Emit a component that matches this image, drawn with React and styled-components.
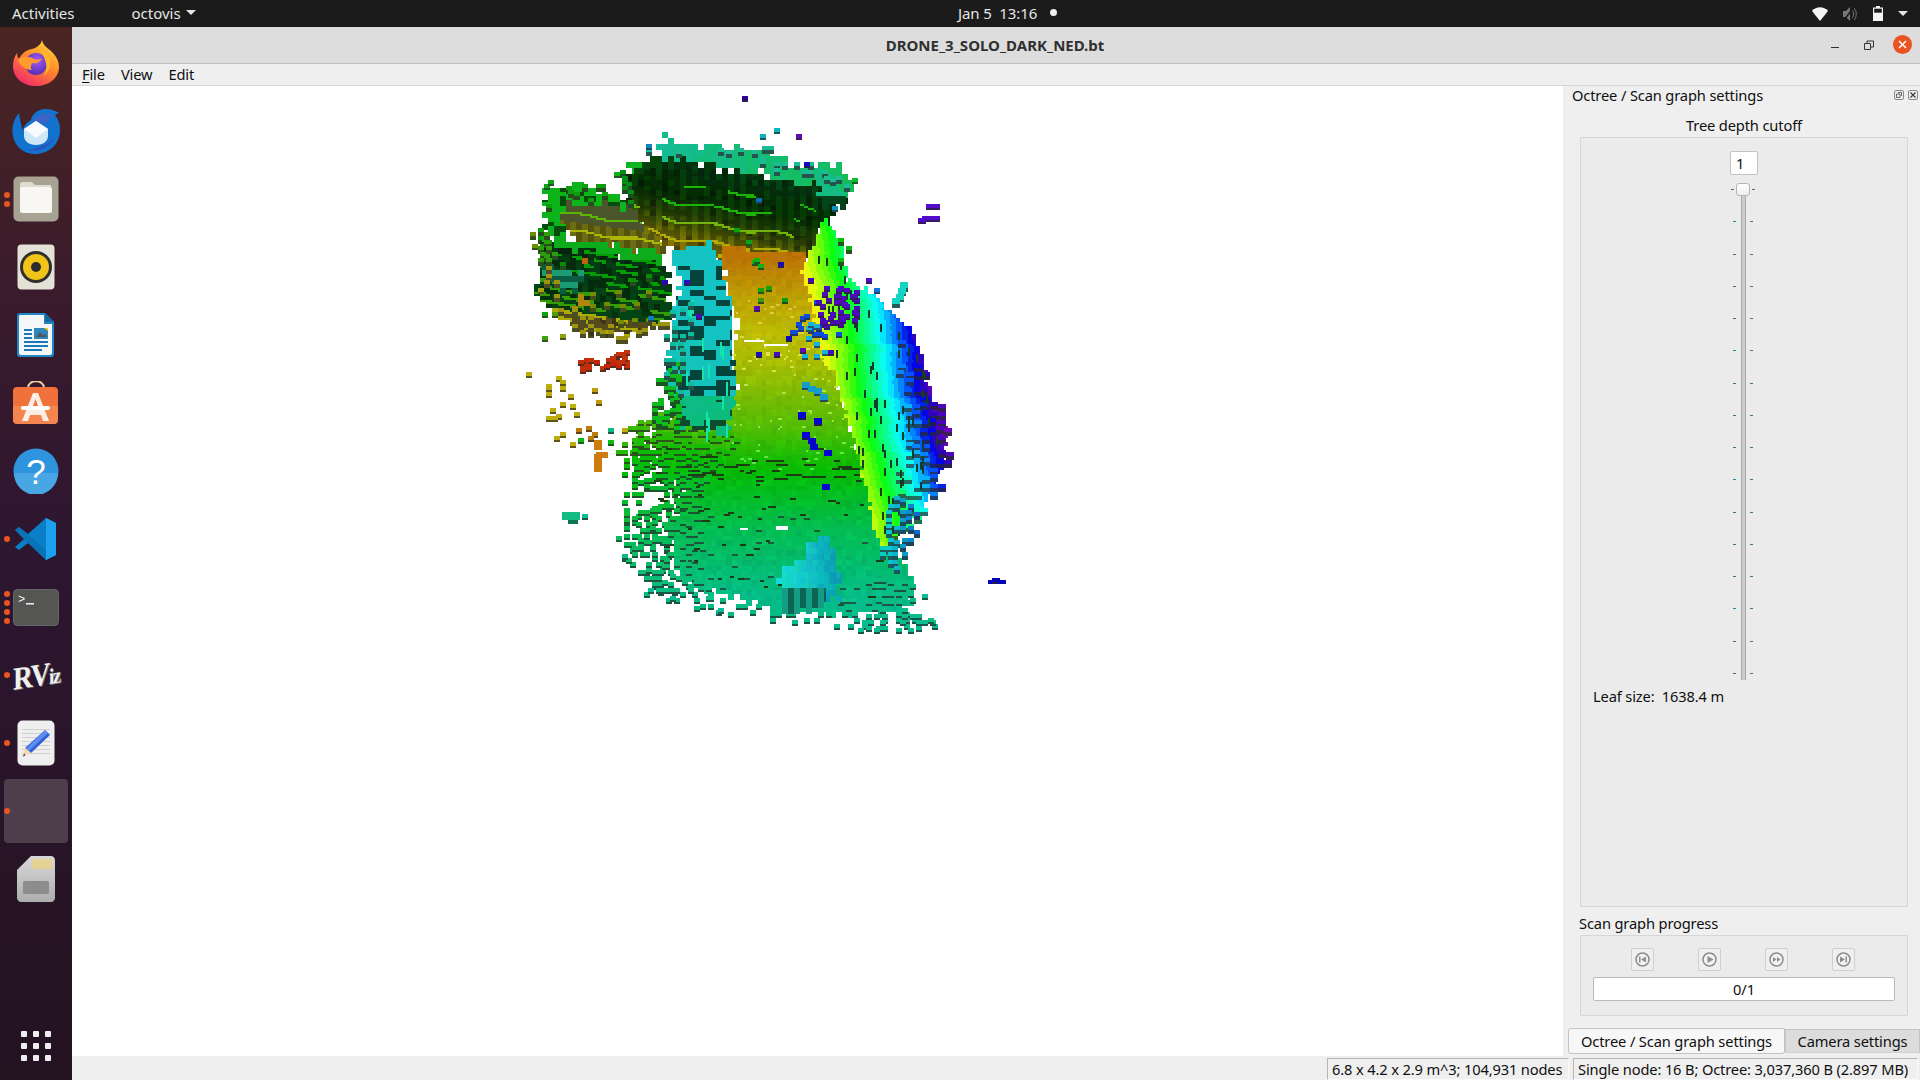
import React from 'react'
import styled, { createGlobalStyle } from 'styled-components'

/* point cloud painter: a small 2px raster, turned into svg paths */
const CELL = 2
const GX = 520
const GY = 90
const GW = 245
const GH = 280

const lerpTable = (table, v) => {
    if (v <= table[0][0]) return table[0][1]
    for (let i = 1; i < table.length; i++) {
        if (v <= table[i][0]) {
            const [a, b] = [table[i - 1], table[i]]
            return a[1] + ((v - a[0]) / (b[0] - a[0])) * (b[1] - a[1])
        }
    }
    return table[table.length - 1][1]
}

const hsv = (h, s, v) => {
    const f = (n) => {
        const k = (n + h / 60) % 6
        return Math.round(255 * (v - v * s * Math.max(0, Math.min(k, 4 - k, 1))))
    }
    return (f(5) << 16) | (f(3) << 8) | f(1)
}

const darken = (c, m = 0.32, add = 28) => {
    const ch = (s) => Math.min(255, Math.round(((c >> s) & 255) * m + add))
    return (ch(16) << 16) | (ch(8) << 8) | ch(0)
}

const noise = (a, b) => {
    const s = Math.sin(a * 127.1 + b * 311.7) * 43758.5453
    return s - Math.floor(s)
}

const inPoly = (x, y, poly) => {
    let inside = false
    for (let i = 0, j = poly.length - 1; i < poly.length; j = i++) {
        const [xi, yi] = poly[i]
        const [xj, yj] = poly[j]
        if (yi > y !== yj > y && x < ((xj - xi) * (y - yi)) / (yj - yi) + xi) inside = !inside
    }
    return inside
}

const z6 = (pts) => pts.map(([x, y]) => [510 + x / 3, 90 + y / 3])
const z7 = (pts) => pts.map(([x, y]) => [510 + x / 3, 360 + y / 3])

const floorHue = (y) => lerpTable([[255, 36], [300, 52], [360, 66], [427, 95], [460, 115], [527, 145], [593, 162], [630, 165]], y)
const wallEdge = (y) => lerpTable([[217, 805], [323, 833], [393, 842], [470, 862], [547, 885]], y)

const wallColor = (x, y) => {
    const d = x - wallEdge(y) - (noise(Math.floor(y / 9), 3) * 5)
    const raw = d < 0 ? Math.max(48, 90 + d * 1.6) : Math.min(282, 90 + d * 2.05)
    const hue = Math.round(raw / 11) * 11
    return hsv(hue, hue > 180 ? 1 : 0.95, hue > 250 ? 0.72 : hue > 225 ? 0.88 : 1)
}

const buildCloud = () => {
    const grid = new Int32Array(GW * GH).fill(-1)
    let seed = 1234567
    const rnd = () => {
        seed = (seed * 1664525 + 1013904223) >>> 0
        return seed / 4294967296
    }

    const rect = (x, y, w, h, c) => {
        const x0 = Math.round((x - GX) / CELL)
        const y0 = Math.round((y - GY) / CELL)
        const x1 = x0 + Math.max(1, Math.round(w / CELL))
        const y1 = y0 + Math.max(1, Math.round(h / CELL))
        for (let r = Math.max(0, y0); r < Math.min(GH, y1); r++) {
            for (let q = Math.max(0, x0); q < Math.min(GW, x1); q++) grid[r * GW + q] = c
        }
    }

    const voxel = (x, y, c, w = 6, h = 4, side = 3) => {
        rect(x, y + h, w, side, darken(c))
        rect(x, y, w, h, c)
    }

    // solid area, edges are stair-stepped and a bit torn
    const paint = (poly, color, block = 6, rough = 8) => {
        const xs = poly.map((p) => p[0])
        const ys = poly.map((p) => p[1])
        for (let y = Math.min(...ys) - rough; y < Math.max(...ys) + rough; y += CELL) {
            for (let x = Math.min(...xs) - rough; x < Math.max(...xs) + rough; x += CELL) {
                const ix = Math.floor(x / block)
                const iy = Math.floor(y / block)
                const bx = ix * block + block / 2 + (noise(ix, iy) - 0.5) * rough
                const by = iy * block + block / 2 + (noise(iy, ix + 7) - 0.5) * rough
                if (inPoly(bx, by, poly)) rect(x, y, CELL, CELL, color(x, y))
            }
        }
    }

    const scatter = (poly, color, { step = 7, prob = 0.5, w = 6, h = 4, side = 3, skip = null } = {}) => {
        const xs = poly.map((p) => p[0])
        const ys = poly.map((p) => p[1])
        for (let y = Math.min(...ys); y < Math.max(...ys); y += step) {
            for (let x = Math.min(...xs); x < Math.max(...xs); x += step) {
                const vx = x + rnd() * 3
                const vy = y + rnd() * 3
                if (rnd() < prob && inPoly(vx, vy, poly) && !(skip && inPoly(vx, vy, skip))) voxel(vx, vy, color(vx, vy), w, h, side)
            }
        }
    }

    const dashes = (poly, colorVal, { count = 100, min = 4, max = 16, h = 2 } = {}) => {
        const xs = poly.map((p) => p[0])
        const ys = poly.map((p) => p[1])
        for (let i = 0; i < count; i++) {
            const x = Math.min(...xs) + rnd() * (Math.max(...xs) - Math.min(...xs))
            const y = Math.min(...ys) + rnd() * (Math.max(...ys) - Math.min(...ys))
            if (inPoly(x, y, poly)) rect(x, y, min + rnd() * (max - min), h, typeof colorVal === 'function' ? colorVal(x, y) : colorVal)
        }
    }

    // back wall, upper left
    const wallT = (x, y) => y - 0.2 * (x - 660) - 158
    const wallFace = (x, y) => {
        const t = wallT(x, y)
        const wob = Math.sin(x / 11) * 2.5 + Math.sin(x / 29) * 3
        const band = (t + wob) % 18
        const col = Math.floor(x / 6) % 2
        if (band < 2.5 && t > 18 && noise(Math.floor(x / 22), Math.floor(t / 18)) > 0.35) {
            const hue = t < 45 ? 112 : t < 62 ? 80 : 58
            return hsv(hue, 1, 0.7)
        }
        const hue = lerpTable([[0, 135], [30, 120], [50, 90], [70, 62], [95, 44]], t)
        const v = lerpTable([[0, 0.26], [30, 0.22], [50, 0.28], [70, 0.42], [95, 0.62]], t)
        return hsv(hue, 0.95, v * (col ? 1 : 0.72) * (noise(Math.floor(x / 6), Math.floor(y / 5)) > 0.75 ? 0.75 : 1))
    }

    // left room wall goes first, it runs under the junction
    const leftFace = (x, y) => {
        const t = y - 0.13 * (x - 563) - 193
        const wob = Math.sin(x / 9) * 1.5
        if ((t + wob) % 17 < 2.5 && t > 8) return t < 24 ? hsv(90, 1, 0.7) : hsv(62, 1, 0.7)
        return t < 26 ? hsv(75, 0.45, 0.33) : hsv(62, 0.85, 0.42 * (Math.floor(x / 6) % 2 ? 1 : 0.8))
    }
    paint(z6([[150, 315], [360, 320], [480, 470], [450, 490], [230, 445], [150, 420]]), leftFace)
    paint(z6([[345, 235], [450, 205], [560, 225], [900, 285], [1005, 315], [960, 375], [880, 515], [620, 505], [450, 480], [345, 330]]), wallFace)
    scatter(z6([[620, 490], [880, 500], [870, 525], [630, 520]]), () => hsv(58, 0.95, 0.7), { prob: 0.4 })

    // green rim of the left wall, mottled
    paint(z6([[100, 295], [190, 280], [280, 295], [350, 325], [370, 350], [160, 318], [160, 430], [100, 430]]), (x, y) => {
        const n = noise(Math.floor(x / 6), Math.floor(y / 5))
        return n > 0.72 ? hsv(125, 0.95, 0.3) : hsv(122 + n * 12, 0.95, 0.7)
    })
    scatter(z6([[60, 420], [100, 280], [350, 280], [365, 320], [110, 330], [110, 480]]), () => hsv(118, 0.95, 0.62), { prob: 0.36 })
    scatter(z6([[330, 235], [360, 235], [365, 340], [335, 340]]), () => hsv(125, 0.95, 0.55), { prob: 0.5, step: 6 })

    // left block in front of it
    const blockFace = (x, y) => {
        const t = y - 0.16 * (x - 553) - 237
        const row = Math.floor(t / 7)
        const on = noise(row, Math.floor(x / 11)) < 0.6 && t % 7 < 3
        const mott = noise(Math.floor(x / 6), row) > 0.6 ? 0.7 : 1
        if (t < 70) return on ? hsv(t < 40 ? 122 : 100, 1, 0.62) : hsv(135, 0.95, (0.2 + (t / 70) * 0.08) * mott)
        return on ? hsv(62, 1, 0.68) : hsv(48, 0.7, 0.34 * mott)
    }
    paint(z6([[85, 455], [440, 505], [480, 545], [480, 690], [300, 735], [200, 712], [105, 630], [85, 600]]), blockFace)
    paint(z6([[105, 430], [140, 432], [440, 480], [440, 512], [120, 465]]), () => hsv(128, 0.95, 0.68))
    paint(z6([[95, 530], [200, 550], [200, 610], [150, 600], [95, 560]]), (x, y) => hsv(162, 0.85, 0.62 * (Math.floor(y / 6) % 2 ? 1 : 0.6)))
    paint(z6([[195, 610], [230, 600], [225, 650], [195, 650]]), () => hsv(42, 0.95, 0.7))
    paint(z6([[210, 500], [245, 500], [240, 520], [210, 520]]), () => hsv(30, 0.95, 0.72))
    scatter(z6([[60, 420], [130, 430], [130, 650], [220, 730], [300, 745], [470, 715], [480, 690], [280, 700], [100, 600]]), (x, y) => (y < 260 ? hsv(105, 0.95, 0.62) : hsv(58, 0.9, 0.6)), { prob: 0.45 })
    scatter(z6([[110, 470], [440, 520], [470, 680], [300, 720], [130, 620]]), (x, y) => (y < 285 ? hsv(118, 0.95, 0.55) : hsv(70, 0.95, 0.55)), { step: 14, prob: 0.3 })

    // floor
    const floorColor = (x, y) => {
        const n = noise(Math.floor(x / 5), Math.floor(y / 5))
        return hsv(floorHue(y), 0.98, 0.71 + n * 0.05)
    }
    const floorSolid = [[717, 250], [803, 255], [830, 360], [862, 462], [885, 548], [905, 565], [915, 592], [905, 605], [885, 615], [840, 612], [800, 612], [740, 600], [690, 585], [670, 560], [665, 520], [690, 500], [665, 470], [655, 430], [700, 425], [733, 400], [735, 330]]
    paint(floorSolid, floorColor)
    dashes([[725, 300], [830, 300], [870, 470], [725, 470]], (x, y) => hsv(floorHue(y) - 4, 0.7, 0.88), { count: 120, min: 2, max: 4 })
    const fringe = [[625, 420], [700, 400], [735, 420], [890, 560], [935, 628], [840, 625], [740, 615], [650, 600], [620, 560], [615, 440]]
    scatter(fringe, (x, y) => hsv(floorHue(y), 0.98, 0.72), { prob: 0.5, side: 2, skip: floorSolid })
    scatter([[625, 420], [700, 400], [735, 440], [690, 500], [630, 480]], (x, y) => hsv(floorHue(y) + 8, 0.98, 0.72), { step: 6, prob: 0.78, h: 4, side: 2 })
    scatter([[630, 510], [700, 490], [700, 590], [660, 592], [625, 560]], (x, y) => hsv(floorHue(y), 0.95, 0.72), { step: 6, prob: 0.6, side: 2 })
    scatter([[830, 590], [900, 570], [935, 625], [860, 635]], (x, y) => hsv(floorHue(y), 0.95, 0.72), { step: 7, prob: 0.6, side: 2 })
    scatter([[670, 500], [880, 520], [900, 610], [700, 600]], (x, y) => hsv(floorHue(y), 0.95, 0.72 + rnd() * 0.05), { step: 12, prob: 0.3, side: 1 })
    dashes([[640, 440], [860, 450], [885, 600], [660, 590]], 0x1b3b14, { count: 70, min: 3, max: 8 })
    dashes([[680, 455], [860, 462], [860, 482], [680, 476]], 0x1b3b14, { count: 36, min: 6, max: 18 })
    rect(743, 340, 20, 2, -1)
    rect(763, 344, 24, 2, -1)
    rect(730, 333, 8, 5, -1)
    rect(740, 527, 8, 2, -1)
    rect(776, 526, 12, 3, -1)

    // right wall, the height colours run across it
    const rightWall = z6([[940, 380], [1000, 450], [1010, 560], [1080, 600], [1100, 620], [1210, 720], [1260, 890]])
        .concat([[947, 427], [943, 470], [917, 513], [887, 547], [877, 540], [860, 460], [837, 377], [823, 357], [803, 270]])
    paint(rightWall, wallColor, 4, 5)
    scatter([[890, 330], [930, 380], [950, 430], [945, 475], [915, 520], [885, 552], [880, 500], [905, 420]], wallColor, { step: 8, prob: 0.55, w: 7, h: 4, side: 4 })
    for (let i = 0; i < 110; i++) {
        const y = 250 + rnd() * 290
        const x = wallEdge(y) + rnd() * 90
        if (inPoly(x, y, rightWall)) rect(x, y, 2, 7, 0x123b2c)
    }
    scatter([[885, 495], [925, 500], [915, 530], [895, 572], [878, 560]], (x, y) => hsv(180 + (x - 885), 0.95, 0.8), { step: 7, prob: 0.7, side: 4 })
    scatter(z6([[985, 420], [1020, 430], [1020, 510], [985, 510]]), () => hsv(118, 0.95, 0.72), { prob: 0.35 })

    // teal column
    const column = [[707, 240], [717, 267], [730, 303], [733, 383], [733, 403], [723, 433], [677, 427], [673, 403], [665, 383], [672, 317], [680, 287], [672, 253]]
    paint(column, (x, y) => {
        const row = Math.floor(y / 5)
        const on = noise(row, Math.floor(x / 13)) < (y < 265 ? 0.88 : 0.64)
        if (y > 395) return on ? hsv(158, 0.95, 0.74) : hsv(150, 0.9, 0.3)
        const hue = y < 340 ? 182 : 176
        return on ? hsv(hue, 0.92, 0.78) : hsv(170, 0.9, 0.26)
    }, 5, 6)
    paint([[677, 404], [728, 396], [732, 408], [680, 416]], () => hsv(160, 0.95, 0.74))
    dashes([[682, 300], [728, 300], [728, 430], [682, 430]], 0x10e0a8, { count: 16, min: 2, max: 3, h: 14 })
    scatter([[655, 370], [675, 360], [680, 430], [650, 420]], () => hsv(125, 0.95, 0.72), { step: 6, prob: 0.7 })
    scatter([[665, 300], [690, 300], [690, 390], [662, 390]], () => hsv(170, 0.92, 0.72), { step: 8, prob: 0.4 })

    // cyan block on the floor
    paint([[805, 537], [830, 540], [837, 560], [840, 593], [810, 607], [783, 613], [777, 573], [783, 560], [805, 557]], (x, y) => {
        if (y > 586 && x < 825) return Math.floor(x / 6) % 2 ? hsv(170, 0.9, 0.4) : hsv(168, 0.9, 0.62)
        return hsv(170 + (x - 780) * 0.2 + noise(Math.floor(x / 6), Math.floor(y / 6)) * 10, 0.92, 0.86 - (x - 780) * 0.003)
    })

    // top bands of the back wall
    const band = z6([[345, 230], [345, 225], [450, 205], [450, 140], [550, 175], [620, 160], [770, 190], [880, 245], [925, 225], [1000, 230], [1025, 290], [1000, 320], [900, 285], [800, 262], [600, 225], [450, 205]])
    paint(band, (x, y) => hsv(160 - (x - 660) * 0.1 + noise(Math.floor(x / 6), Math.floor(y / 6)) * 8, 0.9, 0.74))
    paint(z6([[345, 225], [450, 205], [450, 240], [345, 260]]), (x, y) => hsv(130, 0.95, noise(Math.floor(x / 8), Math.floor(y / 6)) > 0.55 ? 0.7 : 0.25))
    paint(z6([[920, 240], [1010, 300], [1000, 345], [920, 340]]), (x, y) => (y > 195 ? hsv(140, 0.9, 0.28) : hsv(158, 0.9, 0.75)))
    scatter(z6([[410, 170], [560, 170], [780, 170], [1030, 260], [1030, 300], [880, 260], [600, 190], [420, 200]]), () => hsv(165, 0.85, 0.72), { prob: 0.26 })

    // loose voxels, [x, y, hue] in crops of the reference
    const loose6 = [
        [706, 25, 258, 0.55], [760, 138, 185, 0.75], [800, 125, 185, 0.75], [865, 140, 268, 0.7], [888, 222, 240, 0.75], [745, 335, 205, 0.7], [972, 357, 195, 0.75],
        [1032, 270, 130, 0.75], [320, 257, 125, 0.7], [108, 288, 125, 0.65], [120, 278, 125, 0.65], [415, 170, 200, 0.75], [1075, 575, 262, 0.8], [1100, 605, 210, 0.85],
        [742, 655, 268, 0.75], [568, 682, 262, 0.7], [532, 580, 250, 0.75], [462, 580, 250, 0.7], [815, 527, 245, 0.7], [745, 795, 245, 0.75], [802, 795, 260, 0.75],
        [960, 790, 262, 0.7], [880, 782, 270, 0.7], [835, 745, 240, 0.75], [905, 575, 262, 0.7], [425, 688, 200, 0.7], [715, 460, 125, 0.65], [680, 420, 120, 0.65],
        [755, 603, 115, 0.65], [775, 597, 115, 0.65], [752, 632, 100, 0.6], [825, 635, 125, 0.6], [735, 520, 125, 0.7], [750, 530, 125, 0.7], [740, 512, 125, 0.7],
        [105, 745, 100, 0.65], [160, 738, 70, 0.65], [102, 677, 118, 0.65], [135, 675, 90, 0.6], [55, 852, 55, 0.75], [145, 865, 55, 0.75], [115, 893, 55, 0.75],
        [158, 880, 55, 0.75], [68, 432, 75, 0.55], [75, 470, 75, 0.55], [92, 603, 62, 0.65],
    ]
    loose6.forEach(([x, y, h, v]) => voxel(510 + x / 3 - 3, 90 + y / 3 - 3, hsv(h, 0.95, v), 6, 4, 2))

    const loose7 = [
        [55, 45, 55], [115, 85, 55], [115, 105, 55], [158, 70, 55], [158, 88, 55], [185, 112, 55], [255, 95, 48], [268, 130, 50], [160, 136, 55], [190, 140, 58], [127, 152, 55], [202, 162, 55],
        [145, 172, 55], [118, 175, 55], [135, 178, 55], [157, 222, 55], [143, 238, 55], [187, 255, 55], [208, 210, 38], [235, 208, 38], [252, 225, 38], [240, 235, 38], [262, 250, 38],
        [210, 240, 118], [302, 250, 120], [302, 210, 160], [345, 215, 55], [225, 470, 165], [350, 465, 135], [352, 485, 135], [328, 535, 150], [345, 592, 158], [425, 690, 165], [490, 715, 165], [633, 752, 168], [1243, 708, 165], [1265, 785, 160],
    ]
    loose7.forEach(([x, y, h]) => voxel(510 + x / 3 - 3, 360 + y / 3 - 3, hsv(h, 0.95, 0.74), 6, 4, 2))

    // red cluster
    for (let i = 0; i < 34; i++) {
        const x = 578 + rnd() * 55
        const y = 355 - (x - 578) * 0.1 + rnd() * 14
        voxel(x, y, hsv(8 + rnd() * 6, 0.95, 0.76), 6, 4, 2)
    }
    // orange column
    ;[[262, 250], [262, 262], [270, 285], [262, 292], [280, 285], [263, 310], [262, 328]].forEach(([x, y]) => voxel(510 + x / 3 - 4, 360 + y / 3 - 4, hsv(34, 0.95, 0.8), 8, 5, 2))
    // teal lump on the left
    rect(561, 511, 17, 8, hsv(160, 0.9, 0.72))
    rect(567, 519, 10, 4, hsv(160, 0.9, 0.45))
    // blue and purple clusters
    for (let i = 0; i < 70; i++) {
        const x = 790 + rnd() * 65
        const y = 285 + rnd() * 50
        const far = x > 815 && y < 325
        if (x + y * 0.8 > 1050 || x > 815) voxel(x, y, far ? hsv(262, 0.95, 0.75) : hsv(222, 0.95, 0.85), 6, 4, 2)
    }
    for (let i = 0; i < 8; i++) voxel(800 + rnd() * 22, 315 + rnd() * 40, hsv(192, 0.9, 0.85), 6, 4, 2)
    ;[[875, 165], [920, 185], [885, 225], [900, 240], [908, 258], [950, 278], [942, 380], [885, 75], [905, 85], [920, 95], [940, 112]].forEach(([x, y], i) => voxel(510 + x / 3 - 3, 360 + y / 3 - 3, i > 6 ? hsv(195, 0.9, 0.8) : hsv(242, 1, 0.8), 7, 5, 2))
    ;[[1265, 348], [1258, 350], [1275, 350], [1245, 388], [1235, 392], [1255, 385], [1275, 388]].forEach(([x, y]) => voxel(510 + x / 3 - 3, 90 + y / 3 - 3, hsv(262, 0.95, 0.8), 7, 4, 2))
    ;[[1440, 668], [1455, 665], [1470, 666]].forEach(([x, y]) => voxel(510 + x / 3 - 3, 360 + y / 3 - 3, hsv(240, 1, 0.72), 8, 3, 2))
    ;[[1180, 585], [1172, 600], [1165, 620], [1155, 635]].forEach(([x, y]) => voxel(510 + x / 3 - 3, 90 + y / 3 - 3, hsv(176, 0.9, 0.82), 7, 5, 3))

    // merge runs into one path per colour
    const paths = new Map()
    for (let r = 0; r < GH; r++) {
        let q = 0
        while (q < GW) {
            const c = grid[r * GW + q]
            if (c < 0) {
                q++
                continue
            }
            const key = (c & 0xf8f8f8) | 0x040404
            let end = q + 1
            while (end < GW && grid[r * GW + end] >= 0 && ((grid[r * GW + end] & 0xf8f8f8) | 0x040404) === key) end++
            const piece = `M${GX + q * CELL} ${GY + r * CELL}h${(end - q) * CELL}v${CELL}h-${(end - q) * CELL}z`
            paths.set(key, (paths.get(key) || '') + piece)
            q = end
        }
    }
    return [...paths].map(([key, d]) => ({ fill: `#${key.toString(16).padStart(6, '0')}`, d }))
}

const CLOUD = buildCloud()

const GlobalStyle = createGlobalStyle`
    html, body {
        margin: 0;
        padding: 0;
        width: 1920px;
        height: 1080px;
        overflow: hidden;
        font-family: "Noto Sans", "Open Sans", sans-serif;
        font-size: 14.67px;
        letter-spacing: -0.14px;
        color: #101010;
    }
    * { box-sizing: border-box; }
`

const Desktop = styled.div`
    width: 1920px;
    height: 1080px;
    display: flex;
    flex-direction: column;
`

const TopBar = styled.div`
    height: 27px;
    flex: none;
    background: #1b1b1b;
    color: #e6e6e6;
    display: flex;
    align-items: center;
    position: relative;
    font-size: 15px;
    letter-spacing: 0;
`

const TopItem = styled.span`
    margin-left: ${(p) => p.$left}px;
    margin-top: -2px;
    display: flex;
    align-items: center;
    gap: 5px;
`

const Clock = styled.div`
    position: absolute;
    left: 958px;
    top: -1px;
    height: 27px;
    display: flex;
    align-items: center;
    gap: 9px;
    white-space: pre;
    letter-spacing: -0.1px;
`

const RecDot = styled.i`
    width: 7px;
    height: 7px;
    border-radius: 50%;
    background: #f0f0f0;
`

const Caret = styled.i`
    width: 0;
    height: 0;
    border-left: 5px solid transparent;
    border-right: 5px solid transparent;
    border-top: 5px solid #e6e6e6;
`

const Tray = styled.div`
    margin-left: auto;
    margin-right: 12px;
    display: flex;
    align-items: center;
    gap: 15px;
`

const Body = styled.div`
    flex: 1;
    display: flex;
    min-height: 0;
`

const Dock = styled.div`
    width: 72px;
    flex: none;
    background: linear-gradient(180deg, #4a2522 0%, #3a1b2c 25%, #2d1630 50%, #231321 100%);
    display: flex;
    flex-direction: column;
    padding-top: 2px;
`

const DockItem = styled.div`
    height: 68px;
    flex: none;
    position: relative;
    display: flex;
    align-items: center;
    justify-content: center;
    margin-top: ${(p) => (p.$bottom ? 'auto' : '0')};
`

const Highlight = styled.div`
    width: 64px;
    height: 64px;
    border-radius: 4px;
    background: #4e3e4c;
`

const RunDots = styled.div`
    position: absolute;
    left: 4px;
    top: 0;
    bottom: 0;
    display: flex;
    flex-direction: column;
    justify-content: center;
    gap: 3px;
`

const RunDot = styled.i`
    width: 6px;
    height: 6px;
    border-radius: 50%;
    background: #e95420;
`

const AppGrid = styled.div`
    display: grid;
    grid-template-columns: repeat(3, 6px);
    grid-auto-rows: 6px;
    gap: 6px;
`

const AppDot = styled.i`
    border-radius: 1px;
    background: #eeeeee;
`

const RvizMark = styled.span`
    font-family: "Liberation Serif", serif;
    font-weight: bold;
    font-size: 32px;
    letter-spacing: -1.5px;
    color: #f0f0f0;
    transform: skewY(-9deg) scaleX(0.85);
    text-shadow: 1px 1px 0 #777;
    & small {
        font-size: 22px;
    }
`

const AppWindow = styled.div`
    flex: 1;
    display: flex;
    flex-direction: column;
    min-width: 0;
`

const TitleBar = styled.div`
    height: 37px;
    flex: none;
    background: #dddddd;
    border-bottom: 1px solid #bdbdbd;
    display: flex;
    align-items: center;
    justify-content: center;
    position: relative;
`

const Title = styled.span`
    font-weight: bold;
    font-size: 15px;
    letter-spacing: 0;
    color: #303030;
    margin-left: -2px;
`

const WindowControls = styled.div`
    position: absolute;
    right: 8px;
    top: 8px;
    display: flex;
    align-items: center;
    gap: 24px;
`

const CloseButton = styled.span`
    width: 19px;
    height: 19px;
    margin-left: -5px;
    border-radius: 50%;
    background: #e95420;
    display: flex;
    align-items: center;
    justify-content: center;
`

const MenuBar = styled.div`
    height: 22px;
    flex: none;
    background: #efefef;
    border-bottom: 1px solid #d6d6d6;
    display: flex;
    align-items: center;
    padding-left: 10px;
    padding-bottom: 2px;
    gap: 16px;
`

const MenuItem = styled.span`
    & u {
        text-underline-offset: 2px;
    }
`

const Main = styled.div`
    flex: 1;
    display: flex;
    min-height: 0;
`

const Viewer = styled.div`
    flex: 1;
    background: #ffffff;
    min-width: 0;
`

const CloudSvg = styled.svg`
    display: block;
    width: 100%;
    height: 100%;
    shape-rendering: crispEdges;
`

const SidePanel = styled.div`
    width: 357px;
    flex: none;
    background: #efefef;
    display: flex;
    flex-direction: column;
    padding-left: 17px;
    padding-right: 12px;
`

const PanelHead = styled.div`
    height: 18px;
    margin-left: -8px;
    margin-right: -10px;
    display: flex;
    align-items: center;
    justify-content: space-between;
`

const PanelButtons = styled.div`
    display: flex;
    gap: 4px;
`

const CenterLabel = styled.div`
    margin-top: 10px;
    height: 23px;
    padding-bottom: 1px;
    display: flex;
    align-items: center;
    justify-content: center;
`

const Group = styled.div`
    background: #ebebeb;
    border: 1px solid #d6d6d6;
    border-radius: 1px;
    height: ${(p) => p.$h}px;
    flex: none;
    display: flex;
    flex-direction: column;
`

const DepthGroup = styled(Group)`
    align-items: center;
    padding-top: 13px;
`

const SpinBox = styled.div`
    width: 28px;
    height: 24px;
    flex: none;
    background: #ffffff;
    border: 1px solid #c3c3c3;
    border-radius: 2px;
    padding-left: 5px;
    line-height: 22px;
`

const SliderBox = styled.div`
    margin-top: 8px;
    height: 497px;
    width: 24px;
    flex: none;
    position: relative;
    padding: 6px 0;
    display: flex;
    flex-direction: column;
    justify-content: space-between;
    margin-left: -2px;
`

const TickRow = styled.div`
    display: flex;
    justify-content: space-between;
    padding: 0 ${(p) => (p.$first ? 0 : 2)}px;
    height: 1px;
`

const Tick = styled.i`
    width: 3px;
    height: 1px;
    background: ${(p) => p.$color};
`

const Track = styled.div`
    position: absolute;
    left: 9.5px;
    top: 10px;
    bottom: 0;
    width: 5px;
    background: #cccccc;
    border-left: 1px solid #a9a9a9;
    border-right: 1px solid #a9a9a9;
`

const Handle = styled.div`
    position: absolute;
    left: 5px;
    top: 0;
    width: 14px;
    height: 13px;
    background: linear-gradient(180deg, #ffffff, #eeeeee);
    border: 1px solid #b4b4b4;
    border-radius: 3px;
`

const LeafRow = styled.div`
    align-self: flex-start;
    margin-top: 5px;
    margin-left: 12px;
    height: 22px;
    line-height: 22px;
    white-space: pre;
`

const SectionLabel = styled.div`
    height: 28px;
    padding-top: 6px;
    line-height: 21px;
    margin-left: -1px;
`

const MediaRow = styled.div`
    display: flex;
    justify-content: center;
    gap: 44px;
    padding-top: 12px;
    padding-right: 2px;
`

const MediaButton = styled.div`
    width: 23px;
    height: 23px;
    border: 1px solid #cfcfcf;
    border-radius: 2px;
    background: #efefef;
    display: flex;
    align-items: center;
    justify-content: center;
`

const ProgressField = styled.div`
    margin: 6px 12px 0;
    height: 24px;
    background: #ffffff;
    border: 1px solid #b9b9b9;
    border-radius: 2px;
    display: flex;
    align-items: center;
    justify-content: center;
`

const TabBar = styled.div`
    margin-top: 12px;
    margin-left: -12px;
    margin-right: -12px;
    display: flex;
    align-items: flex-start;
`

const Tab = styled.div`
    height: ${(p) => (p.$active ? 26 : 24)}px;
    width: ${(p) => (p.$active ? 217 : 135)}px;
    margin-top: ${(p) => (p.$active ? 0 : 1)}px;
    background: ${(p) => (p.$active ? '#f7f7f7' : '#dcdcdc')};
    border: 1px solid #c4c4c4;
    border-bottom-color: ${(p) => (p.$active ? '#c4c4c4' : '#d0d0d0')};
    border-radius: ${(p) => (p.$active ? '3px 0 3px 3px' : '0')};
    display: flex;
    align-items: center;
    justify-content: center;
`

const StatusBar = styled.div`
    height: 24px;
    flex: none;
    background: #efefef;
    display: flex;
    justify-content: flex-end;
    align-items: flex-end;
    gap: 4px;
    padding-right: 2px;
    position: relative;
`

const StatusCell = styled.div`
    height: 22px;
    width: ${(p) => p.$w}px;
    padding-left: 4px;
    line-height: 20px;
    border-top: 1px solid #b5b5b5;
    border-left: 1px solid #b5b5b5;
    border-right: 1px solid #fafafa;
    border-bottom: 1px solid #fafafa;
    white-space: nowrap;
    overflow: hidden;
`

const FirefoxIcon = () => (
    <svg width="48" height="48" viewBox="0 0 48 48">
        <defs>
            <linearGradient id="ffA" x1="0.8" y1="0" x2="0.2" y2="1">
                <stop offset="0" stopColor="#ffd83a" />
                <stop offset="0.45" stopColor="#ff8a2b" />
                <stop offset="1" stopColor="#f0246e" />
            </linearGradient>
            <radialGradient id="ffB" cx="0.55" cy="0.35" r="0.7">
                <stop offset="0" stopColor="#a55cf0" />
                <stop offset="1" stopColor="#4f2ab5" />
            </radialGradient>
        </defs>
        <path d="M30 1c1 6 6 8 10 12 5 5 7 10 7 15 0 11-10 19-23 19S1 39 1 27c0-5 1-9 4-13 0 3 1 5 2 6 2-5 7-9 13-10 4-1 9-4 10-9z" fill="url(#ffA)" />
        <circle cx="24" cy="25" r="11" fill="url(#ffB)" />
        <path d="M6 20c5-3 11-3 16 0 2 1 6 1 8-1-1 4-6 6-10 5-1 3-2 5 0 7-7 0-13-5-14-11z" fill="#ff9a2f" />
        <path d="M27 11c5 0 10 4 11 11 1 6-2 12-6 15 3-5 3-11 1-16-1-4-3-7-6-10z" fill="#ffb52c" />
    </svg>
)

const ThunderbirdIcon = () => (
    <svg width="50" height="48" viewBox="0 0 50 48">
        <path d="M8 6C3 12 0 20 2 29c2 11 11 18 22 18 13 0 25-9 25-24 0-7-2-11-5-15l4-2c-3-2-8-4-14-4C27 2 21 7 20 13 15 16 12 20 12 24 10 19 9 12 8 6z" fill="#1273cf" />
        <path d="M24 11c6-5 15-6 20-2-5 1-8 4-8 8l-14-2c0-2 1-3 2-4z" fill="#3a64c8" />
        <path d="M13 22l12-8 12 8v7c0 5-5 9-12 9s-12-4-12-9z" fill="#cfe6f7" />
        <path d="M13 22l12-8 12 8-12 9z" fill="#f7fbfe" />
        <path d="M17 43c10 3 22-2 27-13-5 6-15 11-27 13z" fill="#2a55bd" />
    </svg>
)

const FilesIcon = () => (
    <svg width="46" height="46" viewBox="0 0 46 46">
        <rect x="0.5" y="0.5" width="45" height="45" rx="5" fill="#a8a292" />
        <path d="M7 8c0-1 1-2 2-2h10l3 3h16v8H7z" fill="#dedbd0" />
        <path d="M7 13c0-1 1-2 2-2h28c1 0 2 1 2 2v22c0 1-1 2-2 2H9c-1 0-2-1-2-2z" fill="#f8f7f4" />
    </svg>
)

const RhythmboxIcon = () => (
    <svg width="38" height="46" viewBox="0 0 38 46">
        <rect x="0.5" y="0.5" width="37" height="45" rx="4" fill="#e4e1d7" />
        <circle cx="19" cy="23" r="16" fill="#2f2f30" />
        <circle cx="19" cy="23" r="13" fill="#f0c419" />
        <circle cx="19" cy="23" r="5" fill="#2b2b2b" />
    </svg>
)

const WriterIcon = () => (
    <svg width="38" height="46" viewBox="0 0 38 46">
        <path d="M3 1h25l9 9v32c0 2-1 3-3 3H3c-2 0-3-1-3-3V4c0-2 1-3 3-3z" fill="#1e88c7" />
        <path d="M3 3h24v9h8v29c0 1-1 2-2 2H4c-1 0-2-1-2-2V4z" fill="#f4f6f7" />
        <path d="M28 1l9 9h-9z" fill="#166a9e" />
        <path d="M7 17h8v2H7zM7 21h8v2H7zM7 25h8v2H7zM7 29h24v2H7zM7 33h24v2H7zM7 37h18v2H7z" fill="#1a7ab8" />
        <rect x="17" y="16" width="14" height="11" fill="#2e86bd" />
        <path d="M19 25l4-5 3 3 2-1 2 3z" fill="#555" />
        <path d="M27 16h4v3z" fill="#f5c518" />
    </svg>
)

const SoftwareIcon = () => (
    <svg width="46" height="44" viewBox="0 0 46 44">
        <path d="M15 7c0-9 16-9 16 0" fill="none" stroke="#f3cfa0" strokeWidth="2" />
        <rect y="6" width="45" height="37" rx="4" fill="#f0713a" />
        <path d="M0 25h45v14c0 2-2 4-4 4H4c-2 0-4-2-4-4z" fill="#f5854f" />
        <path d="M20 12h5l11 28h-6l-2-6H17l-2 6H9zM22.5 18l-4 11h8z" fill="#fbeee6" />
        <rect x="8" y="25" width="29" height="4" rx="2" fill="#ffffff" />
    </svg>
)

const HelpIcon = () => (
    <svg width="46" height="46" viewBox="0 0 46 46">
        <circle cx="23" cy="23" r="22.5" fill="#2f94de" />
        <path d="M1 25h44a22 22 0 0 1-44 0z" fill="#47a6e3" />
        <text x="23" y="36" textAnchor="middle" fontFamily="Liberation Sans, sans-serif" fontSize="35" fill="#ffffff">?</text>
    </svg>
)

const CodeIcon = () => (
    <svg width="44" height="44" viewBox="0 0 44 44">
        <path d="M32 1l10 5v32l-10 5L14 26l-9 7-4-3 9-8-9-9 4-3 9 7z" fill="#0a7fc8" />
        <path d="M1 13l4-3 27 23v10L1 13z" fill="#0567a8" opacity="0.55" />
        <path d="M32 1l10 5v32l-10 5z" fill="#1ea0f0" />
    </svg>
)

const TerminalIcon = () => (
    <svg width="46" height="37" viewBox="0 0 46 37">
        <rect x="0.5" y="0.5" width="45" height="36" rx="4" fill="#555554" stroke="#666" />
        <text x="5" y="14" fontFamily="Liberation Mono, monospace" fontSize="12" fill="#f2f2f2">&gt;</text>
        <rect x="13" y="14" width="8" height="1.5" fill="#f2f2f2" />
    </svg>
)

const GeditIcon = () => (
    <svg width="38" height="46" viewBox="0 0 38 46">
        <rect x="0.5" y="0.5" width="37" height="45" rx="5" fill="#efefef" />
        <path d="M5 9h28v1H5zM5 13h28v1H5zM5 17h28v1H5zM5 21h28v1H5zM5 25h28v1H5zM5 29h28v1H5zM5 33h28v1H5z" fill="#cfcfcf" />
        <path d="M28 10l5 5-19 18-6-5z" fill="#2f62d8" />
        <path d="M28 10l3 3-19 18-3-2z" fill="#5f8cf0" />
        <path d="M8 28l6 5-8 3z" fill="#f7d8b0" />
        <path d="M7.5 33.5l-2 3 3-1z" fill="#444" />
    </svg>
)

const CardIcon = () => (
    <svg width="38" height="46" viewBox="0 0 38 46">
        <defs>
            <linearGradient id="sdG" x1="0" y1="0" x2="0" y2="1">
                <stop offset="0" stopColor="#d8d8d8" />
                <stop offset="1" stopColor="#adadad" />
            </linearGradient>
        </defs>
        <path d="M14 0h20c2 0 4 2 4 4v38c0 2-2 4-4 4H4c-2 0-4-2-4-4V14z" fill="url(#sdG)" />
        <path d="M16 3h2v10h-2zM20 3h2v10h-2zM24 3h2v10h-2zM28 3h2v10h-2zM32 3h2v10h-2z" fill="#f6d558" />
        <rect x="6" y="25" width="26" height="13" rx="2" fill="#8c8c8c" />
    </svg>
)

const WifiIcon = () => (
    <svg width="16" height="14" viewBox="0 0 16 14"><path d="M0 4c4-5 12-5 16 0L8 14z" fill="#f4f4f4" /></svg>
)

const MutedIcon = () => (
    <svg width="15" height="14" viewBox="0 0 15 14">
        <path d="M0 4h3l4-4v14l-4-4H0z" fill="#777" />
        <path d="M9 3c2 2 2 6 0 8M11 1c3 3 3 9 0 12" stroke="#777" fill="none" />
        <path d="M1 13L11 0" stroke="#1b1b1b" strokeWidth="1.5" />
    </svg>
)

const BatteryIcon = () => (
    <svg width="10" height="15" viewBox="0 0 10 15">
        <path d="M3 0h4v1.5h3V15H0V1.5h3z" fill="#f4f4f4" />
        <rect x="1.2" y="2.7" width="7.6" height="4" fill="#1b1b1b" />
    </svg>
)

const PanelGlyph = ({ close }) => (
    <svg width="10" height="10" viewBox="0 0 10 10">
        <rect x="0.5" y="0.5" width="9" height="9" rx="1.5" fill="none" stroke="#8a8a8a" />
        {close
            ? <path d="M2.5 2.5l5 5M7.5 2.5l-5 5" stroke="#444" strokeWidth="1.4" />
            : <path d="M4 2.5h3.5V6M2.5 4H6v3.500H2.500z" fill="none" stroke="#666" />}
    </svg>
)

const MediaGlyph = ({ d }) => (
    <svg width="15" height="15" viewBox="0 0 15 15">
        <circle cx="7.5" cy="7.5" r="6.500" fill="#f2f2f2" stroke="#8d8d8d" strokeWidth="1.500" />
        <path d={d} fill="#8d8d8d" />
    </svg>
)

const MEDIA = [
    'M4 4.500h1.500v6H4zM11 4.500v6L6 7.500z',
    'M5.500 4v7l6-3.500z',
    'M4 5v5l3.500-2.500zM8 5v5l3.500-2.500z',
    'M4 4.500v6l5-3zM9.500 4.500H11v6H9.500z',
]

const DepthTicks = Array.from({ length: 16 }, (_, i) => i)

export default function App () {
    return (
        <Desktop>
            <GlobalStyle />
            <TopBar>
                <TopItem $left={12}>Activities</TopItem>
                <TopItem $left={57}>octovis <Caret /></TopItem>
                <Clock>Jan 5  13:16 <RecDot /></Clock>
                <Tray>
                    <WifiIcon />
                    <MutedIcon />
                    <BatteryIcon />
                    <Caret />
                </Tray>
            </TopBar>
            <Body>
                <Dock>
                    <DockItem><FirefoxIcon /></DockItem>
                    <DockItem><ThunderbirdIcon /></DockItem>
                    <DockItem><RunDots><RunDot /><RunDot /></RunDots><FilesIcon /></DockItem>
                    <DockItem><RhythmboxIcon /></DockItem>
                    <DockItem><WriterIcon /></DockItem>
                    <DockItem><SoftwareIcon /></DockItem>
                    <DockItem><HelpIcon /></DockItem>
                    <DockItem><RunDots><RunDot /></RunDots><CodeIcon /></DockItem>
                    <DockItem><RunDots><RunDot /><RunDot /><RunDot /><RunDot /></RunDots><TerminalIcon /></DockItem>
                    <DockItem><RunDots><RunDot /></RunDots><RvizMark>RV<small>iz</small></RvizMark></DockItem>
                    <DockItem><RunDots><RunDot /></RunDots><GeditIcon /></DockItem>
                    <DockItem><Highlight /><RunDots><RunDot /></RunDots></DockItem>
                    <DockItem><CardIcon /></DockItem>
                    <DockItem $bottom>
                        <AppGrid>
                            {Array.from({ length: 9 }, (_, i) => <AppDot key={i} />)}
                        </AppGrid>
                    </DockItem>
                </Dock>
                <AppWindow>
                    <TitleBar>
                        <Title>DRONE_3_SOLO_DARK_NED.bt</Title>
                        <WindowControls>
                            <svg width="10" height="10" viewBox="0 0 10 10"><rect x="1" y="7" width="8" height="1" fill="#333" /></svg>
                            <svg width="10" height="10" viewBox="0 0 10 10"><path d="M0.500 3.500h6v6h-6zM3 3V1h6.500v6H7" fill="none" stroke="#333" /></svg>
                            <CloseButton>
                                <svg width="9" height="9" viewBox="0 0 9 9"><path d="M1 1l7 7M8 1l-7 7" stroke="#fff" strokeWidth="1.500" /></svg>
                            </CloseButton>
                        </WindowControls>
                    </TitleBar>
                    <MenuBar>
                        <MenuItem><u>F</u>ile</MenuItem>
                        <MenuItem>View</MenuItem>
                        <MenuItem>Edit</MenuItem>
                    </MenuBar>
                    <Main>
                        <Viewer>
                            <CloudSvg viewBox="72 86 1491 970">
                                {CLOUD.map((p) => <path key={p.fill} fill={p.fill} d={p.d} />)}
                            </CloudSvg>
                        </Viewer>
                        <SidePanel>
                            <PanelHead>
                                Octree / Scan graph settings
                                <PanelButtons><PanelGlyph /><PanelGlyph close /></PanelButtons>
                            </PanelHead>
                            <CenterLabel>Tree depth cutoff</CenterLabel>
                            <DepthGroup $h={770}>
                                <SpinBox>1</SpinBox>
                                <SliderBox>
                                    <Track />
                                    {DepthTicks.map((i) => (
                                        <TickRow key={i} $first={i === 0}>
                                            <Tick $color={i % 4 === 1 ? '#1d8ca0' : '#3a6f90'} />
                                            <Tick $color="#3a6f90" />
                                        </TickRow>
                                    ))}
                                    <Handle />
                                </SliderBox>
                                <LeafRow>Leaf size:  1638.4 m</LeafRow>
                            </DepthGroup>
                            <SectionLabel>Scan graph progress</SectionLabel>
                            <Group $h={81}>
                                <MediaRow>
                                    {MEDIA.map((d) => <MediaButton key={d}><MediaGlyph d={d} /></MediaButton>)}
                                </MediaRow>
                                <ProgressField>0/1</ProgressField>
                            </Group>
                            <TabBar>
                                <Tab $active>Octree / Scan graph settings</Tab>
                                <Tab>Camera settings</Tab>
                            </TabBar>
                        </SidePanel>
                    </Main>
                    <StatusBar>
                        <StatusCell $w={242}>6.8 x 4.2 x 2.9 m^3; 104,931 nodes</StatusCell>
                        <StatusCell $w={345}>Single node: 16 B; Octree: 3,037,360 B (2.897 MB)</StatusCell>
                    </StatusBar>
                </AppWindow>
            </Body>
        </Desktop>
    )
}
